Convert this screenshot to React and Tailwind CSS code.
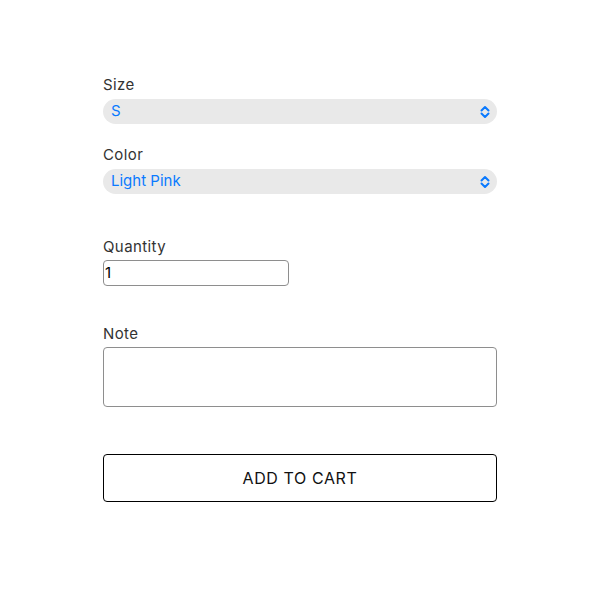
function Chevrons() {
  return (
    <svg width="12" height="14" viewBox="0 0 12 14" fill="none" stroke="#0a7aff" strokeWidth="2" strokeLinecap="round" strokeLinejoin="round">
      <polyline points="2.5,5.5 6,2 9.5,5.5" />
      <polyline points="2.5,8.5 6,12 9.5,8.5" />
    </svg>
  )
}

function SelectField({ label, value }) {
  return (
    <div className="flex flex-col">
      <label className="text-[15px] leading-[18px] text-[#333] tracking-[0.4px] mb-[5px]">{label}</label>
      <div className="h-[25px] rounded-full bg-[#e9e9e9] flex items-center justify-between pl-[8px] pr-[6px]">
        <span className="text-[15px] text-[#0a7aff]">{value}</span>
        <Chevrons />
      </div>
    </div>
  )
}

export default function App() {
  return (
    <div className="w-[600px] h-[600px] bg-white font-['Inter',sans-serif]">
      <div className="pl-[103px] pr-[103px] pt-[76px] flex flex-col">
        <SelectField label="Size" value="S" />
        <div className="h-[22px]" />
        <SelectField label="Color" value="Light Pink" />

        <div className="h-[44px]" />
        <label className="text-[15px] leading-[18px] text-[#333] tracking-[0.4px] mb-[4px]">Quantity</label>
        <div className="w-[186px] h-[26px] border border-[#8e8e8e] rounded-[4px] flex items-center px-[1px]">
          <span className="text-[15px] text-black">1</span>
        </div>

        <div className="h-[39px]" />
        <label className="text-[15px] leading-[18px] text-[#333] tracking-[0.4px] mb-[4px]">Note</label>
        <div className="h-[60px] border border-[#8e8e8e] rounded-[4px]" />

        <div className="h-[47px]" />
        <button className="h-[48px] border-[1.5px] border-black rounded-[4px] bg-white text-[16px] tracking-[0.6px] text-[#111]">
          ADD TO CART
        </button>
      </div>
    </div>
  )
}
